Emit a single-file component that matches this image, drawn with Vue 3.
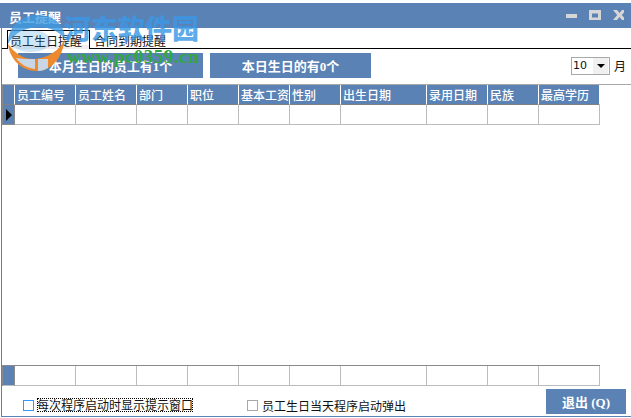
<script setup>
const columns = [
  { label: '员工编号', width: 61 },
  { label: '员工姓名', width: 61 },
  { label: '部门', width: 51 },
  { label: '职位', width: 51 },
  { label: '基本工资', width: 51 },
  { label: '性别', width: 51 },
  { label: '出生日期', width: 86 },
  { label: '录用日期', width: 61 },
  { label: '民族', width: 51 },
  { label: '最高学历', width: 61 }
]
</script>

<template>
  <div class="screen">
    <div class="window">
      <header class="titlebar">
        <span class="title">员工提醒</span>
        <div class="controls">
          <svg width="58" height="14" viewBox="0 0 58 14">
            <rect x="0" y="5" width="11" height="4" fill="#d6d6d6" />
            <path d="M23 1h12v10h-12z M26 4.500v4h6v-4z" fill="#d6d6d6" fill-rule="evenodd" />
            <path d="M47 1h4l2.500 3 2.500-3h4l-4.200 5 4.200 5h-4l-2.500-3-2.500 3h-4l4.200-5z" fill="#d6d6d6" />
          </svg>
        </div>
      </header>

      <nav class="tabs">
        <span class="tab active">员工生日提醒</span>
        <span class="tab">合同到期提醒</span>
      </nav>

      <section class="toolbar">
        <div class="banner first">本月生日的员工有1个</div>
        <div class="banner second">本日生日的有0个</div>
        <div class="month">
          <span class="select">
            <span class="select-value">10</span>
            <span class="select-arrow"></span>
          </span>
          <span>月</span>
        </div>
      </section>

      <section class="grid-area">
        <div class="grid-row head">
          <span class="indicator"></span>
          <span v-for="c in columns" :key="c.label" class="cell" :style="{ width: c.width + 'px' }">{{ c.label }}</span>
        </div>
        <div class="grid-row body">
          <span class="indicator"><i class="pointer"></i></span>
          <span v-for="c in columns" :key="c.label" class="cell" :style="{ width: c.width + 'px' }"></span>
        </div>
        <div class="spacer"></div>
        <div class="grid-row total">
          <span class="indicator"></span>
          <span v-for="c in columns" :key="c.label" class="cell" :style="{ width: c.width + 'px' }"></span>
        </div>
      </section>

      <footer class="footer">
        <label class="check focus-check"><i class="box blue"></i><span class="dotted">每次程序启动时显示提示窗口</span></label>
        <label class="check second-check"><i class="box"></i><span>员工生日当天程序启动弹出</span></label>
        <button class="exit">退出 (Q)</button>
      </footer>
    </div>

    <svg class="watermark" width="210" height="75" viewBox="0 0 210 75">
      <g transform="translate(7 14)">
        <path d="M1 30C1 12 14 1 31 1c16 0 27 10 27 24-8-10-22-14-34-11C13 16 5 22 1 30z" fill="#3f9ae0" opacity="0.8" />
        <ellipse cx="24" cy="27" rx="20" ry="11" fill="#3f9ae0" opacity="0.25" />
        <path d="M1 30c2 16 14 27 29 27 14 0 25-12 28-32-5 11-17 19-30 20-10 1-20-5-27-15z" fill="#ee8a2e" />
        <path d="M9 44c4 6 11 10 19 11V45c-7 0-13 0-19-1z" fill="#c9d6e6" />
        <path d="M31 45h10v9c-3 2-6 3-10 3z" fill="#c9d6e6" />
      </g>
      <text class="wm-name" x="64" y="39">河东软件园</text>
      <text class="wm-url" x="67" y="63">www.pc0359.cn</text>
    </svg>
  </div>
</template>

<style>
html, body { margin: 0; background: #fff; }
</style>

<style scoped>
.screen {
  position: relative;
  width: 631px;
  height: 418px;
  padding-top: 3px;
  box-sizing: border-box;
  background: #fff;
  overflow: hidden;
}
.window {
  height: 414px;
  margin-left: 1px;
  display: flex;
  flex-direction: column;
  border-left: 1px solid #5b82b4;
  border-bottom: 1px solid #5b82b4;
  box-sizing: border-box;
  font-family: "Noto Sans CJK SC", "Liberation Sans", sans-serif;
  font-size: 12px;
  color: #111;
}
.titlebar {
  height: 25px;
  margin-left: -2px;
  background: #5b82b4;
  display: flex;
  align-items: center;
  justify-content: space-between;
  padding: 3px 7px 0 9px;
  box-sizing: border-box;
  color: #fff;
  flex: none;
}
.title { font-size: 13px; font-weight: 700; line-height: 16px; }
.controls { display: flex; margin-top: -3px; }
.controls svg { display: block; }
.tabs {
  height: 21px;
  display: flex;
  align-items: flex-end;
  border-bottom: 1px solid #000;
  padding-left: 5px;
  flex: none;
  box-sizing: border-box;
}
.tab {
  height: 18px;
  line-height: 16px;
  padding: 3px 0 0 4px;
  box-sizing: border-box;
  white-space: nowrap;
}
.tab.active {
  width: 83px;
  height: 19px;
  padding: 2px 0 0 2px;
  margin-bottom: -1px;
  border: 1px solid #000;
  border-bottom: 0;
  background: linear-gradient(#fff 14px, #f0f0f0 14px);
}
.toolbar {
  display: flex;
  align-items: center;
  height: 25px;
  margin-top: 4px;
  margin-bottom: 6px;
  flex: none;
  color: #fff;
}
.banner {
  height: 25px;
  background: #5b82b4;
  display: flex;
  align-items: center;
  justify-content: center;
  font-family: "Liberation Serif", "Noto Sans CJK SC", serif;
  font-weight: 700;
  font-size: 13px;
}
.banner.first { width: 185px; margin-left: 16px; }
.banner.second { width: 161px; margin-left: 7px; }
.month {
  margin-left: auto;
  margin-right: 5px;
  display: flex;
  align-items: center;
  gap: 4px;
  color: #111;
  font-size: 12px;
}
.select {
  width: 39px;
  height: 18px;
  box-sizing: border-box;
  border: 1px solid #a8a8a8;
  display: flex;
  align-items: center;
  justify-content: space-between;
  font-family: "DejaVu Sans", "Liberation Sans", sans-serif;
  font-size: 11px;
  padding: 0 1px;
}
.select-arrow {
  width: 15px;
  height: 16px;
  background: #f0f0f0;
  position: relative;
}
.select-arrow::after {
  content: "";
  position: absolute;
  left: 4px;
  top: 6px;
  border-left: 4px solid transparent;
  border-right: 4px solid transparent;
  border-top: 4px solid #000;
}
.grid-area {
  flex: 1;
  display: flex;
  flex-direction: column;
  border-top: 1px solid #a8a8a8;
  min-height: 0;
}
.grid-row {
  display: flex;
  flex: none;
  border-left: 1px solid #8a8a8a;
  width: 598px;
  box-sizing: border-box;
}
.indicator {
  width: 12px;
  box-sizing: border-box;
  border-right: 1px solid #fff;
  background: #5b82b4;
  display: flex;
  align-items: center;
  flex: none;
}
.cell {
  box-sizing: border-box;
  flex: none;
  border-right: 1px solid #bcbcbc;
}
.head { height: 20px; }
.head .cell {
  background: #5b82b4;
  color: #fff;
  line-height: 19px;
  font-weight: 500;
  padding-left: 2px;
  border-right: 1px solid #fff;
  border-bottom: 1px solid #808080;
  white-space: nowrap;
  overflow: hidden;
}
.head .indicator { border-bottom: 1px solid #808080; }
.body { height: 20px; }
.body .cell { border-bottom: 1px solid #bcbcbc; }
.body .indicator { border-right-color: #8a8a8a; border-bottom: 1px solid #8a8a8a; }
.pointer {
  border-top: 6px solid transparent;
  border-bottom: 6px solid transparent;
  border-left: 6px solid #000;
  margin-left: 3px;
}
.spacer { flex: 1; }
.total {
  height: 21px;
  border-top: 1px solid #8a8a8a;
}
.total .cell { border-bottom: 1px solid #bcbcbc; }
.total .indicator { border-right-color: #8a8a8a; border-bottom: 1px solid #bcbcbc; }
.footer {
  height: 30px;
  flex: none;
  display: flex;
  align-items: flex-end;
}
.check {
  display: flex;
  align-items: center;
  gap: 3px;
  height: 14px;
  margin-bottom: 4px;
  white-space: nowrap;
}
.focus-check { margin-left: 21px; }
.second-check { margin-left: 54px; gap: 4px; }
.box {
  width: 9px;
  height: 9px;
  border: 1px solid #a8a8a8;
  display: block;
}
.box.blue { border-color: #3399ff; }
.dotted { outline: 1px dotted #000; outline-offset: -1px; line-height: 14px; }
.exit {
  margin-left: auto;
  margin-right: 5px;
  margin-bottom: 2px;
  width: 80px;
  height: 25px;
  border: 0;
  background: #5b82b4;
  color: #fff;
  font-family: "Liberation Serif", "Noto Sans CJK SC", serif;
  font-weight: 700;
  font-size: 13px;
  padding: 0;
}
.watermark {
  position: absolute;
  z-index: 50;
  left: 0;
  top: 0;
  pointer-events: none;
}
.wm-name {
  font-family: "Noto Sans CJK SC", sans-serif;
  font-size: 27px;
  font-weight: 900;
  fill: #3a98e6;
  fill-opacity: 0.82;
}
.wm-url {
  font-family: "Liberation Serif", serif;
  font-weight: 700;
  font-size: 19px;
  letter-spacing: 0.5px;
  fill: #2fa83e;
}
</style>
